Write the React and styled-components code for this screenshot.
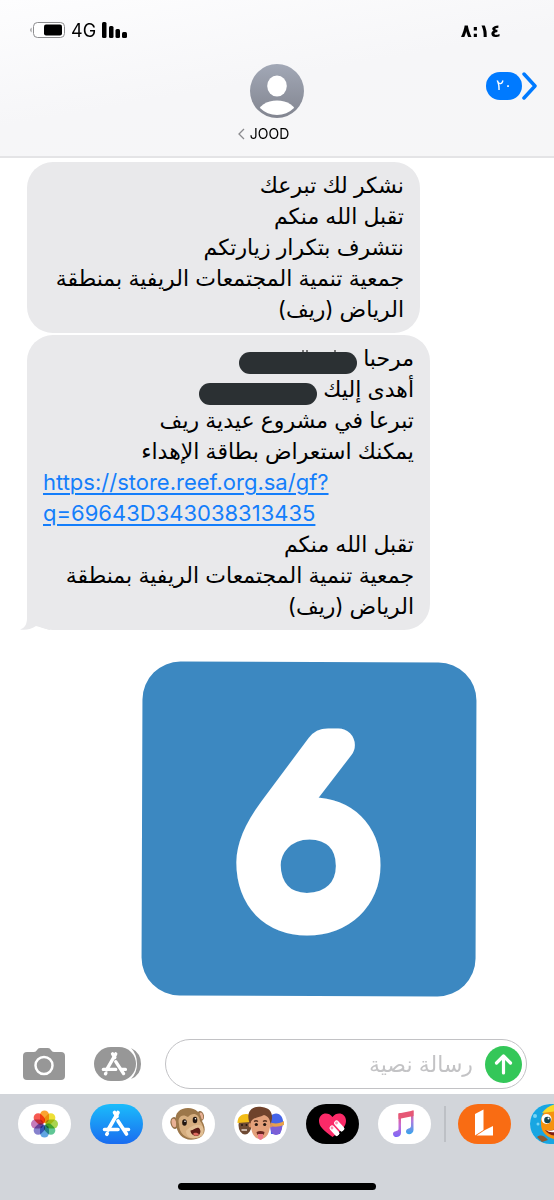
import styled, { createGlobalStyle } from "styled-components";

const GlobalStyle = createGlobalStyle`
    * {
        box-sizing: border-box;
    }
    body {
        margin: 0;
        background-color: white;
        color: black;
        font-family: "Inter", "DejaVu Sans", sans-serif;
    }
`;
const Page = styled.div`
    min-height: 100vh;
    display: flex;
    flex-direction: column;
    overflow: hidden;
`;
const Header = styled.header`
    height: 158px;
    background: linear-gradient(170deg, #fdfdfe 0%, #f6f6f8 50%, #f6f6f7 100%);
    border-bottom: 2px solid #e4e4e6;
`;
const StatusBar = styled.div`
    height: 64px;
    padding: 0 53px 4px 29px;
    display: flex;
    align-items: center;
    justify-content: space-between;
`;
const StatusIcons = styled.div`
    display: flex;
    align-items: center;
    gap: 6px;
    font-size: 18px;
`;
const Time = styled.time`
    font-family: "DejaVu Sans", sans-serif;
    font-size: 18px;
    font-weight: bold;
`;
const NavBar = styled.nav`
    padding: 0 17px;
    display: grid;
    grid-template-columns: 1fr auto 1fr;
    align-items: start;
`;
const Contact = styled.button`
    grid-column: 2;
    padding: 0;
    border: none;
    background: none;
    display: flex;
    flex-direction: column;
    align-items: center;
    gap: 6px;
    color: black;
    font-family: inherit;
    font-size: 14px;
    line-height: 20px;
`;
const ContactName = styled.span`
    display: flex;
    align-items: center;
    gap: 5px;
    padding-right: 27px;
`;
const BackButton = styled.button`
    justify-self: end;
    margin-top: 8px;
    padding: 0;
    border: none;
    background: none;
    display: flex;
    align-items: center;
`;
const Unread = styled.span`
    width: 36px;
    height: 28px;
    border-radius: 14px;
    background-color: #007aff;
    color: white;
    font-family: "DejaVu Sans", sans-serif;
    font-size: 15px;
    line-height: 26px;
    text-align: center;
`;
const Messages = styled.main`
    flex: 1;
    padding: 4px 27px 0;
    display: flex;
    flex-direction: column;
    gap: 2px;
`;
const Bubble = styled.div`
    position: relative;
    width: 100%;
    max-width: ${(props) => props.$max};
    padding: 8px 16px;
    border-radius: 26px;
    background-color: #e9e9eb;
    font-size: 22px;
    line-height: 31px;
`;
const Line = styled.p`
    margin: 0;
`;
const Link = styled.a`
    display: block;
    color: #147efb;
    text-align: left;
    text-decoration: underline;
    text-decoration-thickness: 2px;
    text-underline-offset: 3px;
`;
const Redacted = styled.svg`
    vertical-align: -8px;
    overflow: visible;
`;
const Tail = styled.svg`
    position: absolute;
    left: -7px;
    bottom: 0;
`;
const Sticker = styled.svg`
    align-self: flex-end;
    margin: 29px 50px 24px 0;
    max-width: 100%;
`;
const Composer = styled.form`
    padding: 8px 27px 5px 23px;
    display: flex;
    align-items: center;
`;
const IconButton = styled.button`
    flex: none;
    padding: 0;
    border: none;
    background: none;
    display: flex;
    margin-right: ${(props) => props.$space};
`;
const Field = styled.div`
    flex: 1;
    min-width: 0;
    height: 50px;
    padding: 0 4px 0 20px;
    border: 1px solid #c2c2c5;
    border-radius: 25px;
    display: flex;
    align-items: center;
    gap: 12px;
`;
const TextInput = styled.input`
    flex: 1;
    min-width: 0;
    padding: 0;
    border: none;
    outline: none;
    background: none;
    font-family: inherit;
    font-size: 22px;

    &::placeholder {
        color: #c3c3c5;
        opacity: 1;
    }
`;
const Drawer = styled.footer`
    height: 106px;
    padding: 10px 0 10px 18px;
    background-color: #d2d5da;
    display: flex;
    flex-direction: column;
    justify-content: space-between;
`;
const Apps = styled.div`
    display: flex;
`;
const AppGroup = styled.div`
    display: flex;
    gap: 19px;
`;
const Divider = styled.div`
    flex: none;
    width: 2px;
    height: 36px;
    margin: 2px 12px 2px 13px;
    background-color: #bdc0c5;
`;
const AppButton = styled.button`
    flex: none;
    width: 53px;
    height: 40px;
    padding: 0;
    border: none;
    border-radius: 20px;
    background: ${(props) => props.$bg || "white"};
    overflow: hidden;
    display: flex;
`;
const HomeIndicator = styled.div`
    align-self: center;
    width: 198px;
    height: 7px;
    margin-right: 18px;
    border-radius: 4px;
    background-color: black;
`;

const petals = ["#fb9a1a", "#ecdc20", "#a0d03a", "#4fc08a", "#4f9be0", "#7a74c8", "#c06cb4", "#f5483f"];

function AppStoreMark(){
    return (
        <g fill="none" stroke="white" strokeWidth="3.6" strokeLinecap="round">
            <path d="M28 8.500L18 26" />
            <path d="M24.500 8.500L27 12.500M28 17L36.500 30" />
            <path d="M14.500 25.500H28M34.500 25.500H38.500" />
            <path d="M17.300 29.500L16.800 30.300" />
        </g>
    );
}

function PhotosIcon(){
    return (
        <svg width="53" height="40" viewBox="0 0 53 40">
            {petals.map((color, i) => (
                <rect key={color} x="22" y="6.500" width="9" height="12.500" rx="4.500" fill={color} opacity="0.9"
                    style={{ mixBlendMode: "multiply" }} transform={`rotate(${i * 45} 26.500 20)`} />
            ))}
        </svg>
    );
}

function MonkeyIcon(){
    return (
        <svg width="53" height="40" viewBox="0 0 53 40">
            <ellipse cx="12.500" cy="19" rx="4" ry="6" fill="#94714a" transform="rotate(-12 12.500 19)" />
            <ellipse cx="12" cy="19" rx="2.300" ry="4.300" fill="#e9b196" transform="rotate(-12 12 19)" />
            <ellipse cx="38.500" cy="12" rx="3.500" ry="5" fill="#94714a" transform="rotate(-12 38.500 12)" />
            <ellipse cx="39.300" cy="12" rx="1.800" ry="3.500" fill="#e9b196" transform="rotate(-12 39.300 12)" />
            <path d="M14 18C12 9 18 4 26 4C34 4 39 9 40 17C45 25 43 33 34 35C24 38 14 32 14 18Z" fill="#9c774a" />
            <path d="M17 20C15 13 20 9 26 13C30 8 37 9 38 17C43 23 43 32 34 34C26 36 17 31 17 20Z" fill="#d6ae7f" />
            <path d="M24 27C28 22 37 18 41 23C43 29 41 33 34 34C28 35 24 32 24 27Z" fill="#e2bf94" />
            <ellipse cx="22.500" cy="18.500" rx="2.300" ry="3.200" fill="#211610" />
            <ellipse cx="33" cy="16" rx="2.300" ry="3.200" fill="#211610" />
            <circle cx="23" cy="17.300" r="0.800" fill="white" />
            <circle cx="33.500" cy="14.800" r="0.800" fill="white" />
            <path d="M28.500 26.500C32 26 34 22.500 37 24C40 27 38 32.500 34 32C30.500 31.500 28.500 29 28.500 26.500Z" fill="#5d1d16" />
            <path d="M31 30C32 28 36 28.500 37 30.500C35 32.500 32.500 32 31 30Z" fill="#df6b60" />
        </svg>
    );
}

function MemojiIcon(){
    return (
        <svg width="53" height="40" viewBox="0 0 53 40">
            <ellipse cx="11" cy="21" rx="6.500" ry="9.500" fill="#6e4a34" />
            <path d="M3.500 19C3 8 18 7 19 16L17 18Z" fill="#f3bd19" />
            <circle cx="8" cy="21" r="1" fill="#241611" />
            <circle cx="12.500" cy="21" r="1" fill="#241611" />
            <path d="M7.500 26H13" stroke="#e9d8ce" strokeWidth="1.500" fill="none" />
            <path d="M36 12C43 6 50 11 49 20L46 30H37Z" fill="#4565e8" />
            <path d="M36 20H48C49 26 46 31 42 31C38 31 36 27 36 20Z" fill="#7c5fd6" />
            <path d="M35 18C39 20 46 20 50 17V21Q43 24 36 22Z" fill="#e8a14c" />
            <circle cx="17" cy="21" r="2.500" fill="#d99064" />
            <circle cx="36" cy="21" r="2.500" fill="#d99064" />
            <path d="M17 15C17 7 36 7 36 15C37 26 34 35 26.500 35C19 35 16 26 17 15Z" fill="#e3a07a" />
            <path d="M16 20C11 8 18 1 28 3C38 4 40 12 36.500 20C36 15 34 12 30 11C24 14 18 13 16 20Z" fill="#70422b" />
            <path d="M20 17.500Q22 16 24 17.500M29 17.500Q31 16 33 17.500" stroke="#55301f" fill="none" strokeWidth="1.300" />
            <circle cx="22.300" cy="20.500" r="1.600" fill="#231610" />
            <circle cx="30.700" cy="20.500" r="1.600" fill="#231610" />
            <path d="M22.500 28Q26.500 26 30.500 28Q30 32 26.500 32Q23 32 22.500 28Z" fill="#692720" />
            <path d="M24 30H29V34Q26.500 38 24 34Z" fill="#ef7886" />
        </svg>
    );
}

function TouchIcon(){
    return (
        <svg width="53" height="40" viewBox="0 0 53 40">
            <path d="M26.500 33C17 26 13 22 13 17C13 9 22 7 26.500 13C31 7 40 9 40 17C40 22 36 26 26.500 33Z" fill="#fb2a68" />
            <path d="M26 24L31 29.500M30.500 19L36 25" stroke="white" strokeWidth="5" strokeLinecap="round" />
            <path d="M29 34.500L40 24L44 30L34 39Z" fill="black" />
            <circle cx="26" cy="24" r="1.400" fill="#fb8eae" />
            <circle cx="30.500" cy="19" r="1.400" fill="#fb8eae" />
        </svg>
    );
}

function MusicIcon(){
    return (
        <svg width="53" height="40" viewBox="0 0 53 40">
            <defs>
                <linearGradient id="note" x1="0" y1="0" x2="0" y2="1">
                    <stop offset="0" stopColor="#ee5266" />
                    <stop offset="0.500" stopColor="#c66bd4" />
                    <stop offset="1" stopColor="#7a68f8" />
                </linearGradient>
                <linearGradient id="noteRight" x1="0" y1="0" x2="0" y2="1">
                    <stop offset="0" stopColor="#ee5266" />
                    <stop offset="0.450" stopColor="#ae7ce0" />
                    <stop offset="1" stopColor="#35a5ec" />
                </linearGradient>
            </defs>
            <path d="M20.500 9.500L23 9V29C23 34 15 34.500 15 30C15 26 20.500 28 20.500 25Z" fill="url(#note)" />
            <path d="M33 7L35.500 6.500V26C35.500 31 28 31.500 28 27.500C28 24 33 25 33 22Z" fill="url(#noteRight)" />
            <path d="M20.500 9.500L35.500 6.500V12L20.500 15Z" fill="#e65775" />
        </svg>
    );
}

function FishIcon(){
    return (
        <svg width="53" height="40" viewBox="0 0 53 40">
            <rect width="53" height="40" fill="#18a6e2" />
            <circle cx="5" cy="12" r="2" fill="#79d5f5" />
            <circle cx="8" cy="20" r="1.500" fill="#79d5f5" />
            <path d="M11 20C10 8 19 1 32 2V36C21 36 11 31 11 20Z" fill="#f5920f" />
            <path d="M12 9Q19 0 29 0V7Z" fill="#f9d82a" />
            <circle cx="16.500" cy="15" r="5" fill="white" />
            <circle cx="17.500" cy="16" r="3.300" fill="#164650" />
            <circle cx="18.500" cy="14.500" r="1" fill="white" />
            <path d="M15 26Q20 28 29 24V31Q20 33 15 26Z" fill="#7e1d14" />
            <path d="M16 26Q21 28 29 24V27Q20 30 16 26Z" fill="white" />
            <path d="M7 33Q12 29 18 36L12 38Z" fill="#8c5a33" />
        </svg>
    );
}

function App(){
    return (
        <Page>
            <GlobalStyle />
            <Header>
                <StatusBar>
                    <StatusIcons>
                        <svg width="36" height="18" viewBox="0 0 36 18">
                            <rect x="4.500" y="1.500" width="31" height="15" rx="4" fill="white" stroke="#8d8d8f" />
                            <rect x="15" y="3.500" width="18" height="11" rx="2" />
                            <path d="M2.500 6.500Q0 9 2.500 11.500Z" fill="#8d8d8f" />
                        </svg>
                        <span>4G</span>
                        <svg width="26" height="18" viewBox="0 0 26 18">
                            <rect x="0" y="1" width="4.500" height="16" rx="1.500" />
                            <rect x="7" y="5" width="4.500" height="12" rx="1.500" />
                            <rect x="13.500" y="8" width="4.500" height="9" rx="1.500" />
                            <rect x="20" y="11" width="5" height="6" rx="1.500" />
                        </svg>
                    </StatusIcons>
                    <Time>٨:١٤</Time>
                </StatusBar>
                <NavBar>
                    <Contact>
                        <svg width="54" height="54" viewBox="0 0 54 54">
                            <defs>
                                <linearGradient id="avatar" x1="0" y1="0" x2="0" y2="1">
                                    <stop offset="0" stopColor="#a2a8b6" />
                                    <stop offset="1" stopColor="#828590" />
                                </linearGradient>
                                <clipPath id="avatarClip">
                                    <circle cx="27" cy="27" r="24" />
                                </clipPath>
                            </defs>
                            <circle cx="27" cy="27" r="27" fill="url(#avatar)" />
                            <g fill="white" clipPath="url(#avatarClip)">
                                <ellipse cx="27" cy="22" rx="9.800" ry="10.500" />
                                <ellipse cx="27" cy="49" rx="19" ry="12.500" />
                            </g>
                        </svg>
                        <ContactName>
                            <svg width="7" height="12" viewBox="0 0 7 12" fill="none" stroke="#8a8a8e">
                                <path d="M6 1L1 6L6 11" strokeWidth="1.300" />
                            </svg>
                            JOOD
                        </ContactName>
                    </Contact>
                    <BackButton aria-label="رجوع">
                        <Unread>٢٠</Unread>
                        <svg width="15" height="28" viewBox="0 0 15 28" fill="none" stroke="#007aff">
                            <path d="M2 2L13 14L2 26" strokeWidth="3.500" strokeLinecap="round" strokeLinejoin="round" />
                        </svg>
                    </BackButton>
                </NavBar>
            </Header>
            <Messages>
                <Bubble dir="rtl" $max="393px">
                    <Line>نشكر لك تبرعك</Line>
                    <Line>تقبل الله منكم</Line>
                    <Line>نتشرف بتكرار زيارتكم</Line>
                    <Line>جمعية تنمية المجتمعات الريفية بمنطقة الرياض (ريف)</Line>
                </Bubble>
                <Bubble dir="rtl" $max="403px">
                    <Line>
                        مرحبا{" "}
                        <Redacted width="118" height="22" viewBox="0 0 118 22">
                            <rect width="118" height="22" rx="11" fill="#2b3033" />
                            <path d="M63 -1H65M67 -1H69M95 -1H97" stroke="black" strokeWidth="1" />
                        </Redacted>
                    </Line>
                    <Line>
                        أهدى إليك{" "}
                        <Redacted width="118" height="22" viewBox="0 0 118 22">
                            <rect width="118" height="22" rx="11" fill="#2b3033" />
                        </Redacted>
                    </Line>
                    <Line>تبرعا في مشروع عيدية ريف</Line>
                    <Line>يمكنك استعراض بطاقة الإهداء</Line>
                    <Link dir="ltr" href="https://store.reef.org.sa/gf?q=69643D343038313435">
                        https://store.reef.org.sa/gf?<wbr />q=69643D343038313435
                    </Link>
                    <Line>تقبل الله منكم</Line>
                    <Line>جمعية تنمية المجتمعات الريفية بمنطقة الرياض (ريف)</Line>
                    <Tail width="30" height="26" viewBox="0 0 30 26">
                        <path d="M7 0V14C7 20 5 24 0 25.500C6 26.500 12 25 16 22L30 26V0Z" fill="#e9e9eb" />
                    </Tail>
                </Bubble>
                <Sticker width="336" height="336" viewBox="0 0 336 336">
                    <rect x="1" y="1" width="334" height="334" rx="38" fill="#3c88c1" transform="rotate(0.200 168 168)" />
                    <text x="166" y="256" textAnchor="middle" fontFamily="Lato" fontWeight="300" fontSize="244"
                        fill="white" stroke="white" strokeWidth="33" strokeLinejoin="round">6</text>
                </Sticker>
            </Messages>
            <Composer>
                <IconButton type="button" aria-label="الكاميرا" $space="29px">
                    <svg width="42" height="33" viewBox="0 0 42 33">
                        <path d="M4 4H11Q13 4 14 2Q15 0 17 0H25Q27 0 28 2Q29 4 31 4H38Q42 4 42 8V28Q42 32 38 32H4Q0 32 0 28V8Q0 4 4 4Z" fill="#979797" />
                        <circle cx="21" cy="17.500" r="8.500" fill="none" stroke="white" strokeWidth="2.500" />
                    </svg>
                </IconButton>
                <IconButton type="button" aria-label="التطبيقات" $space="24px">
                    <svg width="47" height="34" viewBox="0 0 47 34">
                        <path d="M37 1Q47 6 47 17Q47 28 37 32Q43 26 43 17Q43 7 37 1Z" fill="#979797" />
                        <rect width="42" height="34" rx="17" fill="#979797" />
                        <g transform="translate(-4 -1) scale(0.920)">
                            <AppStoreMark />
                        </g>
                    </svg>
                </IconButton>
                <Field>
                    <TextInput type="text" dir="rtl" placeholder="رسالة نصية" aria-label="رسالة نصية" />
                    <IconButton type="submit" aria-label="إرسال" $space="0">
                        <svg width="37" height="37" viewBox="0 0 37 37" fill="none" stroke="white">
                            <circle cx="18.500" cy="18.500" r="18.500" fill="#34c759" stroke="none" />
                            <path d="M18.500 27V10.500M11.500 17L18.500 10L25.500 17" strokeWidth="3.200" strokeLinecap="round" strokeLinejoin="round" />
                        </svg>
                    </IconButton>
                </Field>
            </Composer>
            <Drawer>
                <Apps>
                    <AppGroup>
                        <AppButton aria-label="Photos"><PhotosIcon /></AppButton>
                        <AppButton aria-label="App Store" $bg="linear-gradient(#1bbcfb, #1a6cf0)">
                            <svg width="53" height="40" viewBox="0 0 53 40"><AppStoreMark /></svg>
                        </AppButton>
                        <AppButton aria-label="Animoji"><MonkeyIcon /></AppButton>
                        <AppButton aria-label="Memoji"><MemojiIcon /></AppButton>
                        <AppButton aria-label="Digital Touch" $bg="black"><TouchIcon /></AppButton>
                        <AppButton aria-label="Music"><MusicIcon /></AppButton>
                    </AppGroup>
                    <Divider />
                    <AppGroup>
                        <AppButton aria-label="Store" $bg="#f96c13">
                            <svg width="53" height="40" viewBox="0 0 53 40" fill="white">
                                <path d="M17 10L25.500 5.500V26L17 31.500Z" />
                                <path d="M27 26L35 22V31.500H18.500Z" />
                            </svg>
                        </AppButton>
                        <AppButton aria-label="Game"><FishIcon /></AppButton>
                    </AppGroup>
                </Apps>
                <HomeIndicator />
            </Drawer>
        </Page>
    );
}

export default App;
